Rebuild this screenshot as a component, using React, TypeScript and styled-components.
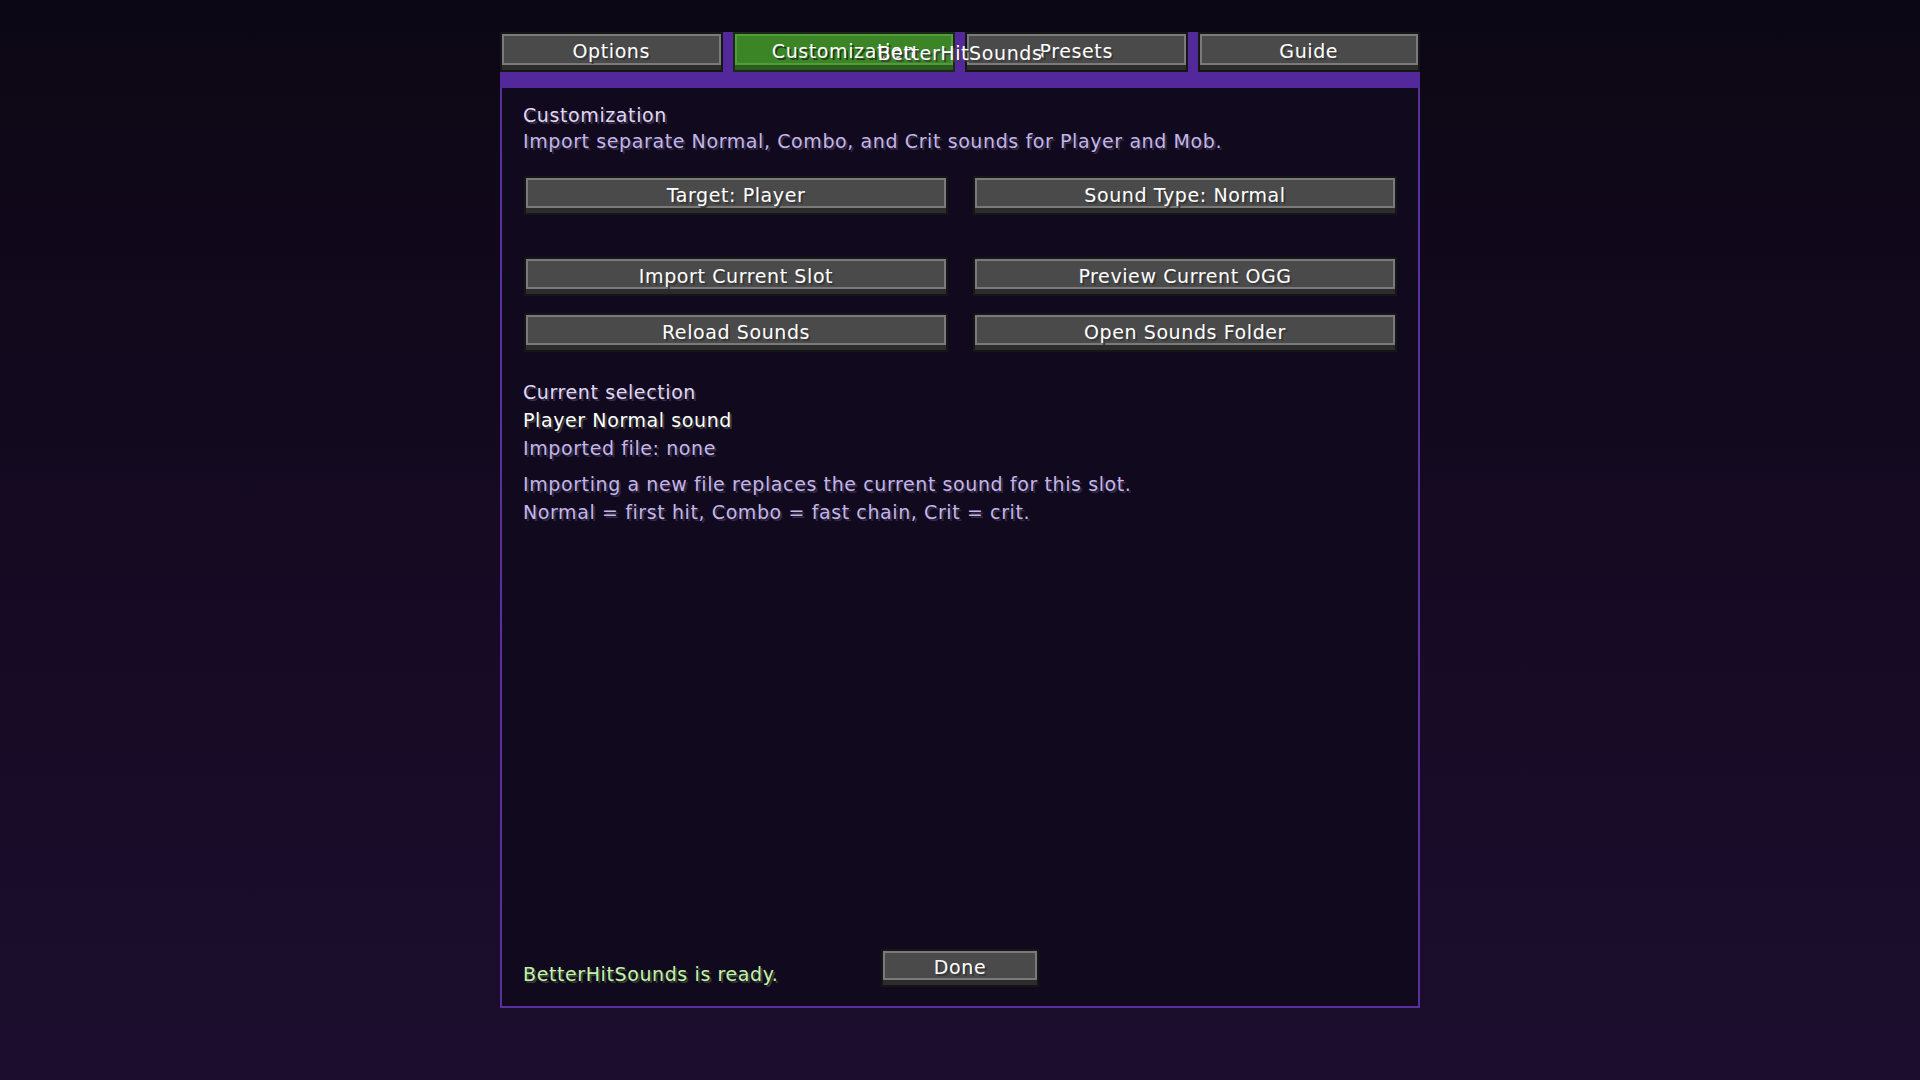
import styled, { createGlobalStyle } from "styled-components";

const GlobalStyle = createGlobalStyle`
  html, body {
    margin: 0;
    padding: 0;
  }
  body {
    font-family: "DejaVu Sans", "Liberation Sans", sans-serif;
  }
`;

const TABS = ["Options", "Customization", "Presets", "Guide"];
const ACTIVE_TAB = "Customization";

export default function App() {
  return (
    <Screen>
      <GlobalStyle />
      <Panel>
        <Header>
          <TabRow>
            {TABS.map((t) => (
              <Tab key={t} $active={t === ACTIVE_TAB}>
                {t}
              </Tab>
            ))}
          </TabRow>
          <Title>BetterHitSounds</Title>
        </Header>
        <Body>
          <Heading>Customization</Heading>
          <Muted $top={6}>
            Import separate Normal, Combo, and Crit sounds for Player and Mob.
          </Muted>
          <ButtonGrid $top={25}>
            <McButton>Target: Player</McButton>
            <McButton>Sound Type: Normal</McButton>
          </ButtonGrid>
          <ButtonGrid $top={42}>
            <McButton>Import Current Slot</McButton>
            <McButton>Preview Current OGG</McButton>
          </ButtonGrid>
          <ButtonGrid $top={17}>
            <McButton>Reload Sounds</McButton>
            <McButton>Open Sounds Folder</McButton>
          </ButtonGrid>
          <Heading $top={30}>Current selection</Heading>
          <Strong $top={8}>Player Normal sound</Strong>
          <Muted $top={8}>Imported file: none</Muted>
          <Muted $top={16}>
            Importing a new file replaces the current sound for this slot.
          </Muted>
          <Muted $top={8}>Normal = first hit, Combo = fast chain, Crit = crit.</Muted>
          <Footer>
            <Status>BetterHitSounds is ready.</Status>
            <DoneButton>Done</DoneButton>
            <span />
          </Footer>
        </Body>
      </Panel>
    </Screen>
  );
}

const Screen = styled.div`
  min-height: 100vh;
  box-sizing: border-box;
  padding-top: 32px;
  display: flex;
  flex-direction: column;
  align-items: center;
  background: linear-gradient(180deg, #0c0714 0%, #150a22 50%, #1c0d2e 100%);
`;

const Panel = styled.div`
  width: 920px;
  height: 976px;
  display: flex;
  flex-direction: column;
`;

const Header = styled.div`
  position: relative;
  background: #53289a;
  padding-bottom: 16px;
`;

const TabRow = styled.div`
  display: grid;
  grid-template-columns: repeat(4, 1fr);
  column-gap: 10px;
`;

const face = `
  box-sizing: border-box;
  border: 2px solid #161616;
  background: #4a4a4a;
  color: #ffffff;
  font-family: "DejaVu Sans", "Liberation Sans", sans-serif;
  font-size: 19px;
  line-height: 20px;
  letter-spacing: 0.6px;
  text-shadow: 2px 2px 0 #383838;
  display: flex;
  align-items: center;
  justify-content: center;
  white-space: nowrap;
  box-shadow:
    inset 0 -5px 0 #2c2c2c,
    inset 0 -7px 0 #7a7a7a,
    inset 2px 2px 0 #7a7a7a,
    inset -2px 0 0 #7a7a7a;
`;

const Tab = styled.div<{ $active?: boolean }>`
  ${face}
  height: 40px;
  padding-bottom: 3px;
  ${(p) =>
    p.$active &&
    `
    border-color: #1b2a16;
    background: #3c8527;
    text-shadow: 2px 2px 0 #1f3d14;
    box-shadow:
      inset 0 -5px 0 #2a5d1d,
      inset 0 -7px 0 #529c3c,
      inset 2px 2px 0 #529c3c,
      inset -2px 0 0 #529c3c;
  `}
`;

const Title = styled.div`
  position: absolute;
  top: 11px;
  left: 50%;
  transform: translateX(-50%);
  color: #ffffff;
  font-size: 19px;
  line-height: 20px;
  letter-spacing: 0.6px;
  text-shadow: 2px 2px 0 #3f3f3f;
  white-space: nowrap;
  pointer-events: none;
`;

const Body = styled.div`
  flex: 1;
  display: flex;
  flex-direction: column;
  background: #110a1e;
  border: 2px solid #5a30a0;
  border-top: none;
  padding: 17px 21px 19px 21px;
`;

const TextLine = styled.div<{ $top?: number }>`
  margin-top: ${(p) => p.$top ?? 0}px;
  font-size: 19px;
  line-height: 20px;
  letter-spacing: 0.6px;
  white-space: nowrap;
`;

const Heading = styled(TextLine)`
  color: #e2d8f6;
  text-shadow: 2px 2px 0 #383048;
`;

const Muted = styled(TextLine)`
  color: #c6b6e8;
  text-shadow: 2px 2px 0 #322a46;
`;

const Strong = styled(TextLine)`
  color: #ffffff;
  text-shadow: 2px 2px 0 #3c3c3c;
`;

const ButtonGrid = styled.div<{ $top?: number }>`
  margin-top: ${(p) => p.$top ?? 0}px;
  display: grid;
  grid-template-columns: 1fr 1fr;
  column-gap: 25px;
  padding-left: 1px;
`;

const McButton = styled.div`
  ${face}
  height: 39px;
  padding-bottom: 1px;
`;

const Footer = styled.div`
  margin-top: auto;
  display: grid;
  grid-template-columns: 1fr 158px 1fr;
  align-items: end;
`;

const Status = styled.div`
  color: #c6f2ae;
  font-size: 19px;
  line-height: 20px;
  letter-spacing: 0.6px;
  text-shadow: 2px 2px 0 #33402c;
  white-space: nowrap;
  margin-bottom: 3px;
`;

const DoneButton = styled.div`
  ${face}
  height: 38px;
  padding-bottom: 3px;
`;
